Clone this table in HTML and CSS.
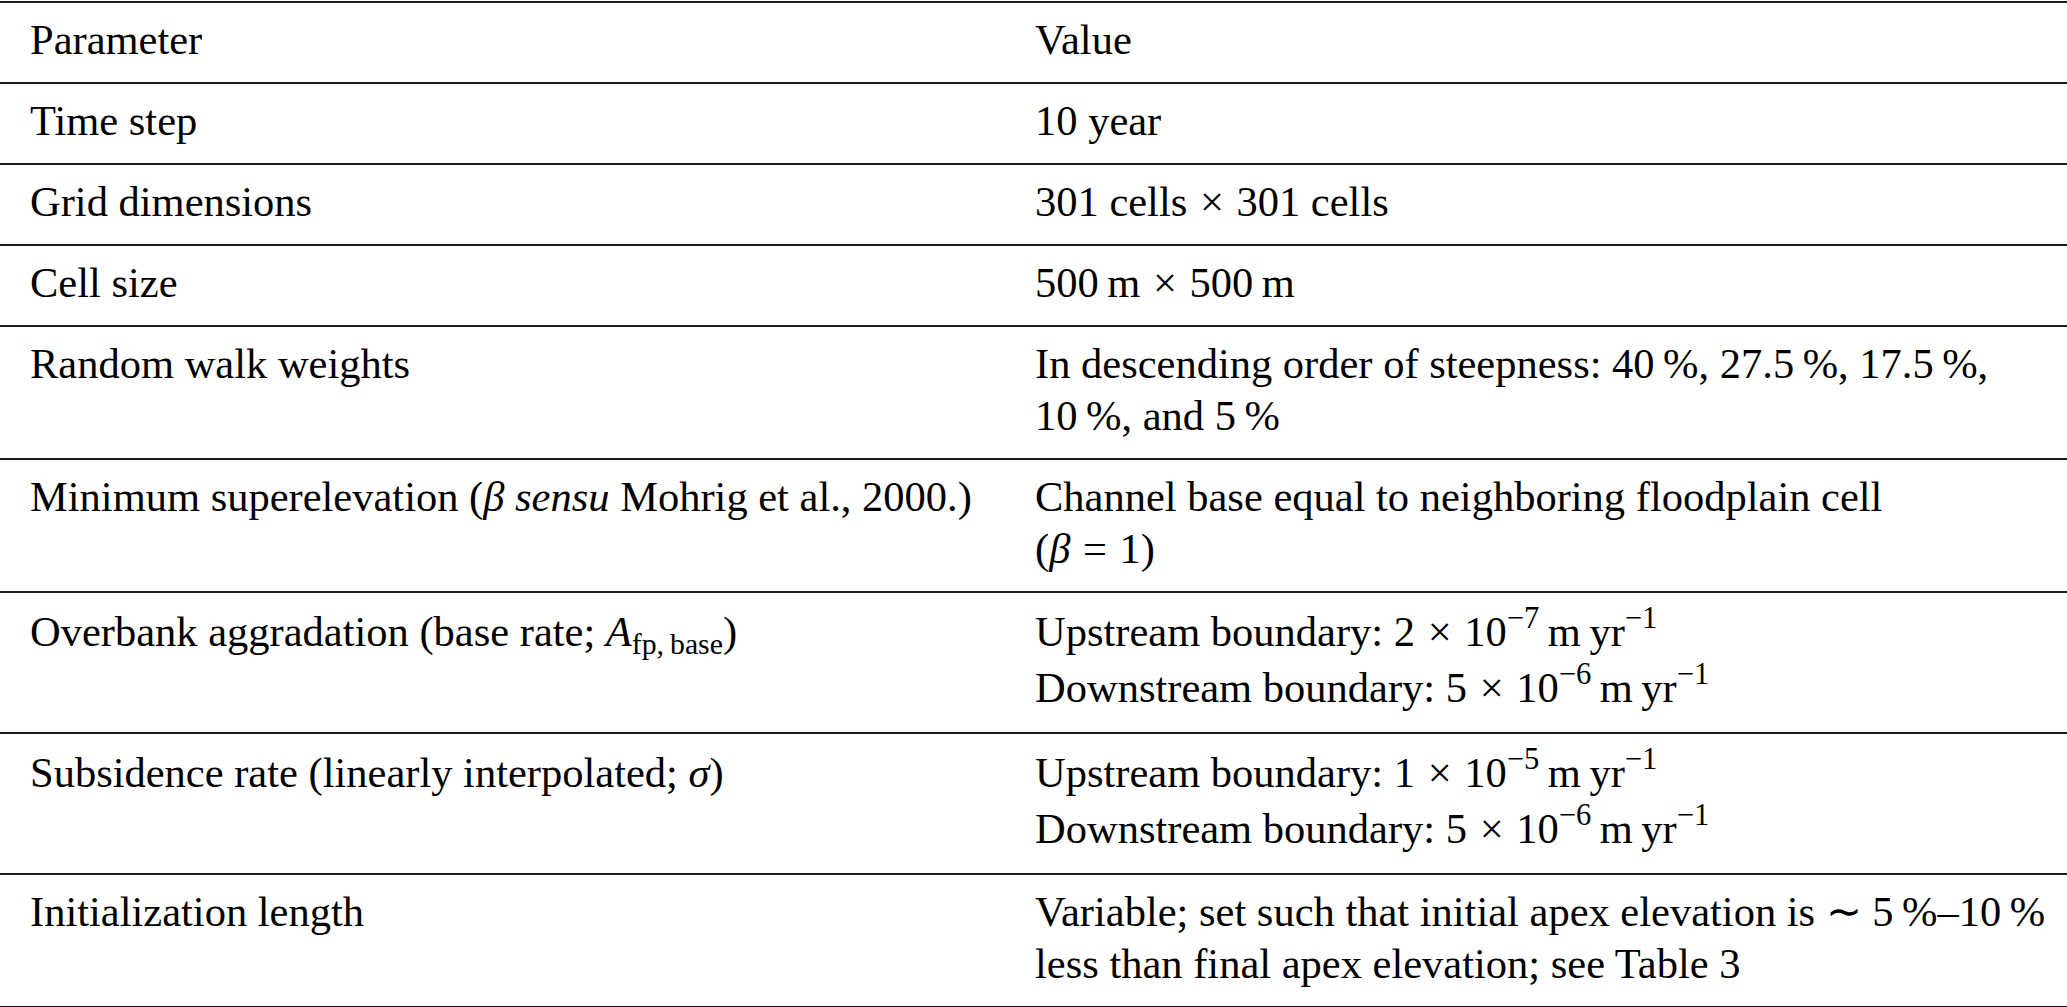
FILE: index.html
```html
<!DOCTYPE html>
<html lang="en">
<head>
<meta charset="utf-8">
<title>Model parameters</title>
<link rel="stylesheet" href="styles.css">
</head>
<body>
<div class="table">
  <div class="row">
    <div class="c1">Parameter</div>
    <div class="c2">Value</div>
  </div>
  <div class="row">
    <div class="c1">Time step</div>
    <div class="c2">10 year</div>
  </div>
  <div class="row">
    <div class="c1">Grid dimensions</div>
    <div class="c2">301 cells <span class="op">×</span> 301 cells</div>
  </div>
  <div class="row">
    <div class="c1">Cell size</div>
    <div class="c2">500&#8201;m <span class="op">×</span> 500&#8201;m</div>
  </div>
  <div class="row">
    <div class="c1">Random walk weights</div>
    <div class="c2">In descending order of steepness: 40&#8201;%, 27.5&#8201;%, 17.5&#8201;%,<br>10&#8201;%, and 5&#8201;%</div>
  </div>
  <div class="row">
    <div class="c1">Minimum superelevation (<i>β</i> <i>sensu</i> Mohrig et al., 2000.)</div>
    <div class="c2">Channel base equal to neighboring floodplain cell<br>(<i>β</i> <span class="op">=</span> 1)</div>
  </div>
  <div class="row tall">
    <div class="c1">Overbank aggradation (base rate; <i>A</i><sub>fp,&#8201;base</sub>)</div>
    <div class="c2">Upstream boundary: 2 <span class="op">×</span> 10<sup>−7</sup>&#8201;m&#8201;yr<sup>−1</sup><br>Downstream boundary: 5 <span class="op">×</span> 10<sup>−6</sup>&#8201;m&#8201;yr<sup>−1</sup></div>
  </div>
  <div class="row tall">
    <div class="c1">Subsidence rate (linearly interpolated; <i>σ</i>)</div>
    <div class="c2">Upstream boundary: 1 <span class="op">×</span> 10<sup>−5</sup>&#8201;m&#8201;yr<sup>−1</sup><br>Downstream boundary: 5 <span class="op">×</span> 10<sup>−6</sup>&#8201;m&#8201;yr<sup>−1</sup></div>
  </div>
  <div class="row">
    <div class="c1">Initialization length</div>
    <div class="c2">Variable; set such that initial apex elevation is ∼ 5&#8201;%–10&#8201;%<br>less than final apex elevation; see Table 3</div>
  </div>
</div>
</body>
</html>
```

FILE: styles.css
```css
html, body {
  margin: 0;
  padding: 0;
  background: #ffffff;
}

body {
  color: #000000;
  font-family: "Liberation Serif", "Times New Roman", serif;
  font-size: 42.5px;
}

.table {
  margin-top: 1px;
  border-top: 2px solid #1c1c1c;
}

.row {
  display: grid;
  grid-template-columns: 1005px 1fr;
  padding: 11px 0 16px;
  line-height: 52px;
  border-bottom: 2px solid #1c1c1c;
}

.row.tall {
  line-height: 56px;
}

.c1 {
  padding-left: 30px;
  white-space: nowrap;
}

.c2 {
  padding-left: 30px;
  white-space: nowrap;
}

.op {
  padding: 0 2px;
}

sup {
  font-size: 0.72em;
  line-height: 0;
  vertical-align: 0.58em;
}

sub {
  font-size: 0.7em;
  line-height: 0;
  vertical-align: -0.28em;
}

i {
  font-style: italic;
}
```
